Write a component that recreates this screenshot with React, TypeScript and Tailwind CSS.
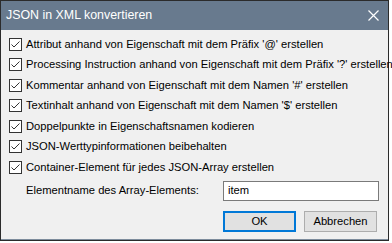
const options = [
  "Attribut anhand von Eigenschaft mit dem Präfix '@' erstellen",
  "Processing Instruction anhand von Eigenschaft mit dem Präfix '?' erstellen",
  "Kommentar anhand von Eigenschaft mit dem Namen '#' erstellen",
  "Textinhalt anhand von Eigenschaft mit dem Namen '$' erstellen",
  "Doppelpunkte in Eigenschaftsnamen kodieren",
  "JSON-Werttypinformationen beibehalten",
  "Container-Element für jedes JSON-Array erstellen",
]

const CheckRow = ({ label }: { label: string }) => {
  return <div className="flex items-center h-[20.5px] gap-[4px]">
    <div className="w-[13px] h-[13px] border border-[#333333] bg-white flex items-center justify-center shrink-0">
      <svg width="11" height="11" viewBox="0 0 11 11">
        <path d="M1.5 5.5 L4 8 L9.5 2.5" fill="none" stroke="#333333" strokeWidth="1" />
      </svg>
    </div>
    <span className="whitespace-nowrap">{label}</span>
  </div>
}

export default function App() {
  return <div className="w-[392px] h-[243px] bg-white" style={{ fontFamily: '"Liberation Sans", Arial, sans-serif' }}>
    <div className="w-[389px] h-[241px] border border-[#2b2b2b] flex flex-col text-[11.2px] text-black">
      <div className="h-[29px] bg-[#687a8e] flex items-center justify-between pl-[5px] pr-[9px] text-white shrink-0">
        <span className="text-[12.4px]">JSON in XML konvertieren</span>
        <svg width="11" height="11" viewBox="0 0 11 11">
          <path d="M0.5 0.5 L10.5 10.5 M10.5 0.5 L0.5 10.5" stroke="#ffffff" strokeWidth="1.2" />
        </svg>
      </div>
      <div className="flex-1 bg-[#f0f0f0] border-b border-[#7d8c9c] flex flex-col pl-[8px] pr-[9px] pt-[4px]">
        {options.map(o => <CheckRow key={o} label={o} />)}
        <div className="flex items-center justify-between mt-[3px] pl-[17px]">
          <span>Elementname des Array-Elements:</span>
          <div className="w-[156px] h-[20px] bg-white border border-[#7a7a7a] flex items-center px-[4px]">item</div>
        </div>
        <div className="flex justify-end gap-[8px] mt-[10px] pr-[2px]">
          <button className="w-[73px] h-[21px] bg-[#e1e1e1] border-2 border-[#0078d7] flex items-center justify-center">OK</button>
          <button className="w-[73px] h-[21px] bg-[#e1e1e1] border border-[#adadad] flex items-center justify-center">Abbrechen</button>
        </div>
      </div>
    </div>
  </div>
}
